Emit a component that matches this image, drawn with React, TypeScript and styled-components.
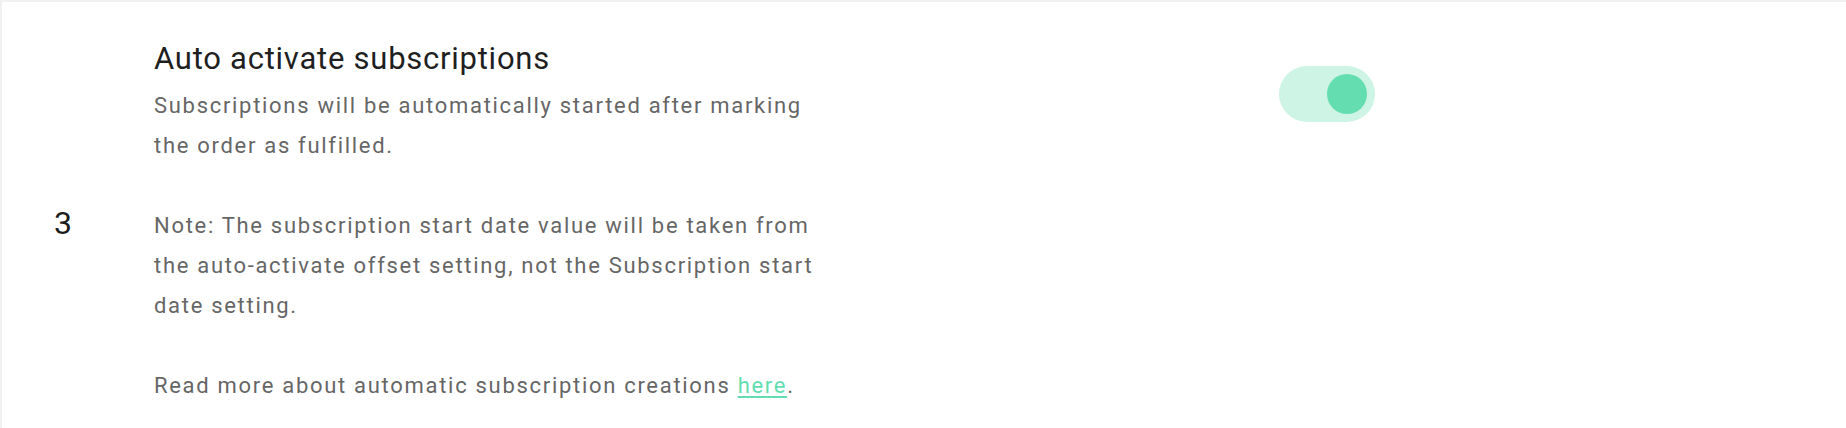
import React from "react";
import styled, { createGlobalStyle } from "styled-components";

const Global = createGlobalStyle`
  html, body { margin: 0; padding: 0; background: #ffffff; }
  body { font-family: Roboto, "Noto Sans", "Liberation Sans", sans-serif; }
`;

const Table = styled.div`
  border-top: 2px solid #f1f1f1;
  border-left: 2px solid #f1f1f1;
  background: #fff;
`;

const Row = styled.div`
  display: grid;
  grid-template-columns: 152px 1125px 96px 1fr;
  padding: 38px 0 30px 0;
`;

const Num = styled.div`
  align-self: center;
  padding-left: 52px;
  font-size: 32px;
  line-height: 32px;
  color: #1d1d1d;
`;

const Content = styled.div`
  max-width: 686px;
`;

const Title = styled.h3`
  margin: 0 0 9px 0;
  font-size: 31px;
  font-weight: 400;
  line-height: 37px;
  letter-spacing: 0.75px;
  color: #1f1f1f;
`;

const Text = styled.p<{ $gap?: boolean }>`
  margin: ${(p) => (p.$gap ? "40px 0 0 0" : "0")};
  font-size: 22px;
  line-height: 40px;
  letter-spacing: 1.7px;
  color: #666666;
`;

const Link = styled.a`
  color: #63ddb0;
  text-decoration: underline;
  text-underline-offset: 3px;
  text-decoration-thickness: 2px;
`;

const ToggleCell = styled.div`
  padding-top: 26px;
`;

const Track = styled.button<{ $on: boolean }>`
  display: flex;
  align-items: center;
  justify-content: ${(p) => (p.$on ? "flex-end" : "flex-start")};
  width: 96px;
  height: 56px;
  padding: 0 8px;
  border: none;
  border-radius: 28px;
  background: #cdf4e5;
  cursor: pointer;
  box-sizing: border-box;
`;

const Thumb = styled.span`
  width: 40px;
  height: 40px;
  border-radius: 50%;
  background: #64ddb1;
`;

export default function App() {
  const [on, setOn] = React.useState(true);
  return (
    <>
      <Global />
      <Table>
        <Row>
          <Num>3</Num>
          <Content>
            <Title>Auto activate subscriptions</Title>
            <Text>
              Subscriptions will be automatically started after marking the
              order as fulfilled.
            </Text>
            <Text $gap>
              Note: The subscription start date value will be taken from the
              auto-activate offset setting, not the Subscription start date
              setting.
            </Text>
            <Text $gap>
              Read more about automatic subscription creations{" "}
              <Link href="#">here</Link>.
            </Text>
          </Content>
          <ToggleCell>
            <Track $on={on} onClick={() => setOn(!on)} aria-label="toggle">
              <Thumb />
            </Track>
          </ToggleCell>
          <div />
        </Row>
      </Table>
    </>
  );
}
